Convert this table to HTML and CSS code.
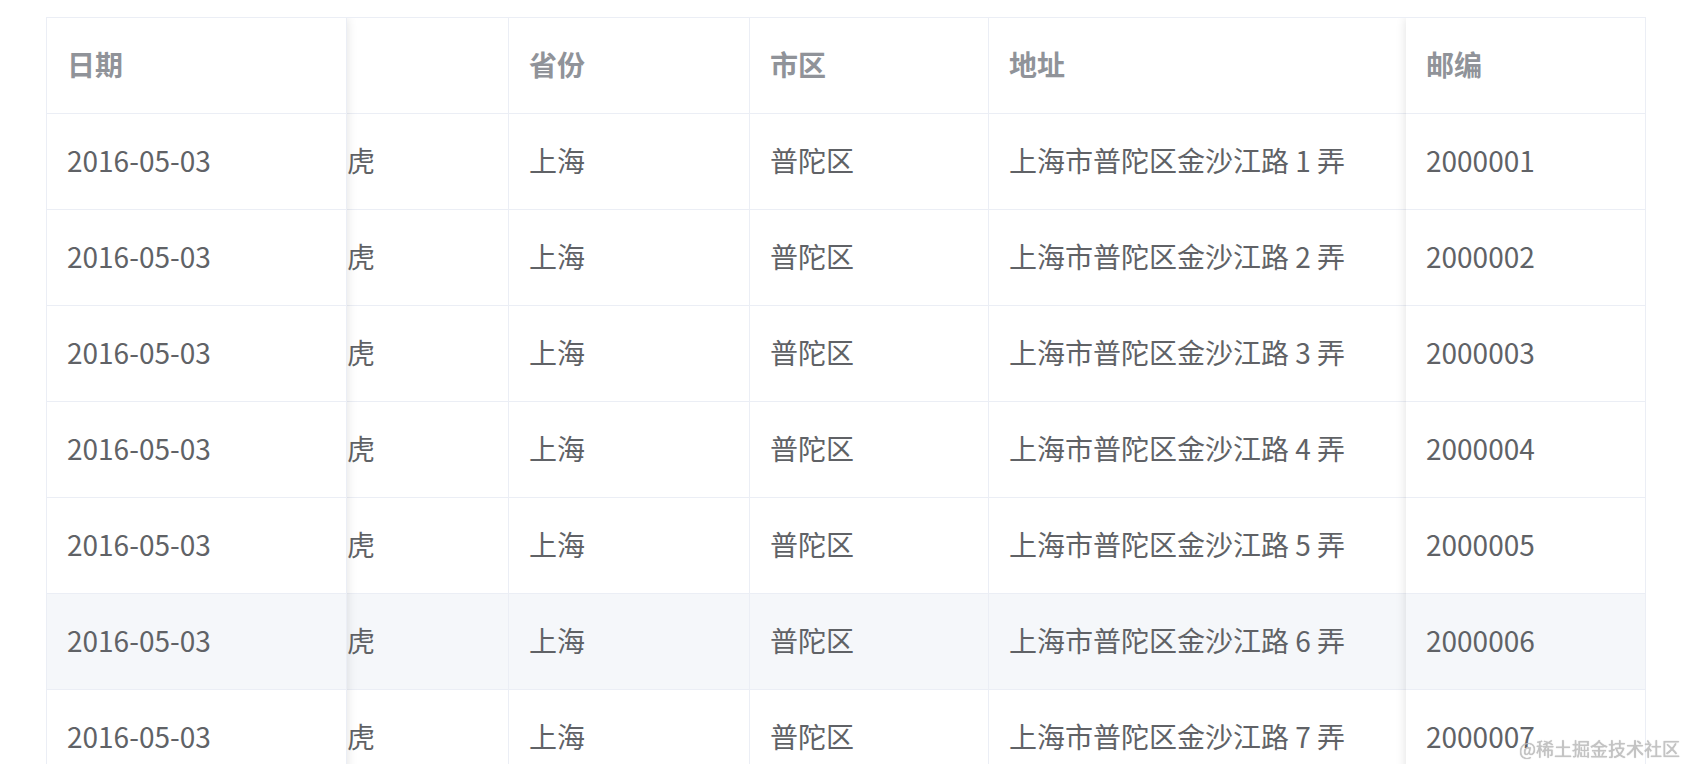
FILE: index.html
```html
<!DOCTYPE html>
<html lang="zh-CN">
<head>
<meta charset="utf-8">
<title>表格</title>
<link rel="stylesheet" href="styles.css">
</head>
<body>
<div class="page">
  <div class="table">
    <div class="fixed fixed-left">
      <div class="cell head">日期</div>
      <div class="cell">2016-05-03</div>
      <div class="cell">2016-05-03</div>
      <div class="cell">2016-05-03</div>
      <div class="cell">2016-05-03</div>
      <div class="cell">2016-05-03</div>
      <div class="cell hover">2016-05-03</div>
      <div class="cell">2016-05-03</div>
    </div>
    <div class="scroll">
      <div class="scroll-inner">
        <div class="row">
          <div class="cell head c-name">姓名</div>
          <div class="cell head c-prov">省份</div>
          <div class="cell head c-city">市区</div>
          <div class="cell head c-addr">地址</div>
        </div>
        <div class="row">
          <div class="cell c-name">王小虎</div>
          <div class="cell c-prov">上海</div>
          <div class="cell c-city">普陀区</div>
          <div class="cell c-addr">上海市普陀区金沙江路 1 弄</div>
        </div>
        <div class="row">
          <div class="cell c-name">王小虎</div>
          <div class="cell c-prov">上海</div>
          <div class="cell c-city">普陀区</div>
          <div class="cell c-addr">上海市普陀区金沙江路 2 弄</div>
        </div>
        <div class="row">
          <div class="cell c-name">王小虎</div>
          <div class="cell c-prov">上海</div>
          <div class="cell c-city">普陀区</div>
          <div class="cell c-addr">上海市普陀区金沙江路 3 弄</div>
        </div>
        <div class="row">
          <div class="cell c-name">王小虎</div>
          <div class="cell c-prov">上海</div>
          <div class="cell c-city">普陀区</div>
          <div class="cell c-addr">上海市普陀区金沙江路 4 弄</div>
        </div>
        <div class="row">
          <div class="cell c-name">王小虎</div>
          <div class="cell c-prov">上海</div>
          <div class="cell c-city">普陀区</div>
          <div class="cell c-addr">上海市普陀区金沙江路 5 弄</div>
        </div>
        <div class="row hover">
          <div class="cell c-name">王小虎</div>
          <div class="cell c-prov">上海</div>
          <div class="cell c-city">普陀区</div>
          <div class="cell c-addr">上海市普陀区金沙江路 6 弄</div>
        </div>
        <div class="row">
          <div class="cell c-name">王小虎</div>
          <div class="cell c-prov">上海</div>
          <div class="cell c-city">普陀区</div>
          <div class="cell c-addr">上海市普陀区金沙江路 7 弄</div>
        </div>
      </div>
    </div>
    <div class="fixed fixed-right">
      <div class="cell head">邮编</div>
      <div class="cell">2000001</div>
      <div class="cell">2000002</div>
      <div class="cell">2000003</div>
      <div class="cell">2000004</div>
      <div class="cell">2000005</div>
      <div class="cell hover">2000006</div>
      <div class="cell">2000007</div>
    </div>
  </div>
</div>
<div class="watermark">@稀土掘金技术社区</div>
</body>
</html>
```

FILE: styles.css
```css
html, body {
  margin: 0;
  padding: 0;
  overflow: hidden;
  background: #ffffff;
}

body {
  font-family: "Noto Sans CJK SC", "Noto Sans", sans-serif;
  font-size: 28px;
  color: #606266;
}

.page {
  padding: 17px 0 0 46px;
}

.table {
  width: 1600px;
  box-sizing: border-box;
  border-top: 1px solid #ebeef5;
  border-left: 1px solid #ebeef5;
  display: flex;
  overflow: hidden;
  background: #ffffff;
}

.fixed {
  position: relative;
  z-index: 2;
  background: #ffffff;
  box-shadow: 0 0 10px rgba(0, 0, 0, 0.12);
  flex: none;
}

.fixed-left {
  width: 300px;
}

.fixed-right {
  width: 240px;
}

.scroll {
  flex: 1;
  overflow: hidden;
  position: relative;
  z-index: 1;
}

.scroll-inner {
  margin-left: -76px;
}

.row {
  display: flex;
}

.cell {
  height: 96px;
  box-sizing: border-box;
  border-bottom: 1px solid #ebeef5;
  border-right: 1px solid #ebeef5;
  padding: 0 20px 4px 20px;
  display: flex;
  align-items: center;
  white-space: nowrap;
  overflow: hidden;
  flex: none;
  background: #ffffff;
}

.cell.head {
  color: #909399;
  font-weight: 700;
  padding-bottom: 4px;
}

.cell.hover,
.row.hover .cell {
  background: #f5f7fa;
}

.c-name { width: 238px; }
.c-prov { width: 241px; }
.c-city { width: 239px; }
.c-addr { width: 440px; }

.watermark {
  position: fixed;
  right: 8px;
  bottom: 5px;
  font-size: 18px;
  line-height: 22px;
  color: #c4c4c4;
  text-shadow: 0 0 1px rgba(0, 0, 0, 0.35);
  z-index: 5;
}
```
